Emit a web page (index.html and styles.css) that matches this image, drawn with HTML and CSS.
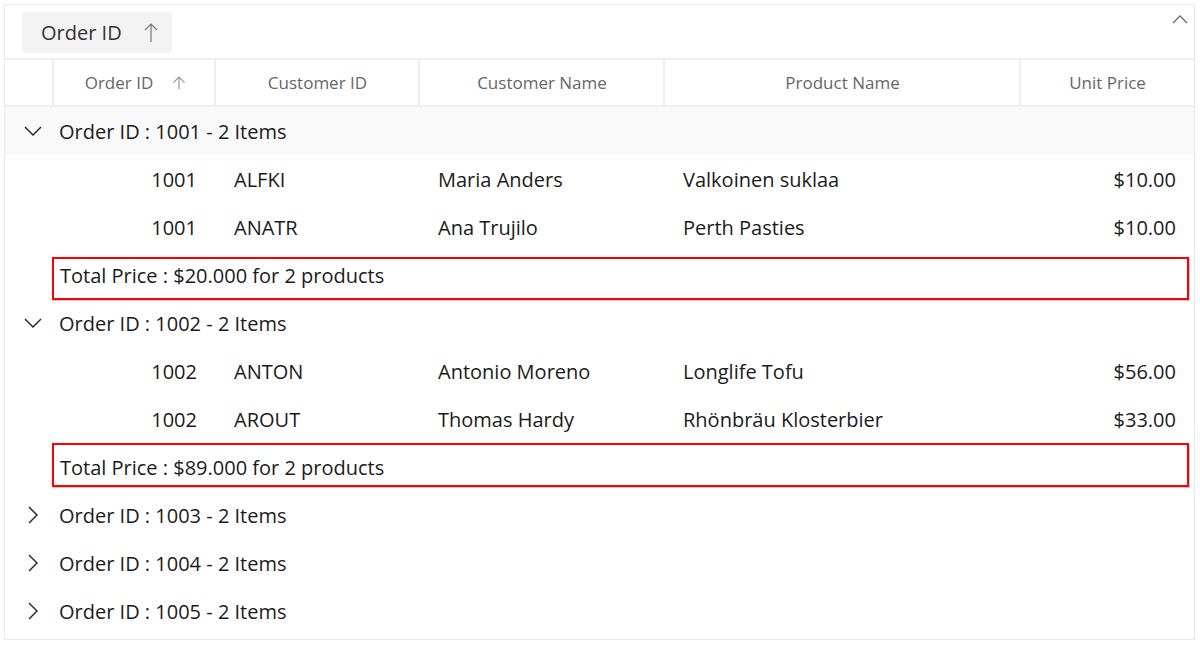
FILE: index.html
```html
<!DOCTYPE html>
<html>
<head>
<meta charset="utf-8">
<link rel="stylesheet" href="styles.css">
</head>
<body>
<div class="grid">
  <div class="group-panel">
    <div class="chip">
      <span class="chip-text">Order ID</span>
      <svg class="chip-arrow" width="14" height="20" viewBox="0 0 14 20"><path d="M7 1 V19 M1 7 L7 1 L13 7" fill="none" stroke="#7a7a7a" stroke-width="1.2"/></svg>
    </div>
    <svg class="panel-toggle" width="16" height="10" viewBox="0 0 16 10"><path d="M1 9 L8 2 L15 9" fill="none" stroke="#6b6b6b" stroke-width="1.3"/></svg>
  </div>
  <div class="header row-grid">
    <div class="hcell indent"></div>
    <div class="hcell sorted"><span>Order ID</span><svg class="hsort" width="14" height="14" viewBox="0 0 14 14"><path d="M7 1 V13 M1.5 6.5 L7 1 L12.5 6.5" fill="none" stroke="#9a9a9a" stroke-width="1.2"/></svg></div>
    <div class="hcell">Customer ID</div>
    <div class="hcell">Customer Name</div>
    <div class="hcell">Product Name</div>
    <div class="hcell">Unit Price</div>
  </div>

  <div class="group-row hl">
    <div class="expander"><svg width="18" height="10" viewBox="0 0 18 10"><path d="M1 1 L9 9 L17 1" fill="none" stroke="#2b2b2b" stroke-width="1.5"/></svg></div>
    <div class="group-text">Order ID : 1001 - 2 Items</div>
  </div>
  <div class="row-grid data">
    <div></div><div class="num">1001</div><div>ALFKI</div><div>Maria Anders</div><div>Valkoinen suklaa</div><div class="num">$10.00</div>
  </div>
  <div class="row-grid data">
    <div></div><div class="num">1001</div><div>ANATR</div><div>Ana Trujilo</div><div>Perth Pasties</div><div class="num">$10.00</div>
  </div>
  <div class="summary-row first"><div class="summary-box">Total Price : $20.000 for 2 products</div></div>

  <div class="group-row">
    <div class="expander"><svg width="18" height="10" viewBox="0 0 18 10"><path d="M1 1 L9 9 L17 1" fill="none" stroke="#2b2b2b" stroke-width="1.5"/></svg></div>
    <div class="group-text">Order ID : 1002 - 2 Items</div>
  </div>
  <div class="row-grid data">
    <div></div><div class="num">1002</div><div>ANTON</div><div>Antonio Moreno</div><div>Longlife Tofu</div><div class="num">$56.00</div>
  </div>
  <div class="row-grid data">
    <div></div><div class="num">1002</div><div>AROUT</div><div>Thomas Hardy</div><div>Rhönbräu Klosterbier</div><div class="num">$33.00</div>
  </div>
  <div class="summary-row second"><div class="summary-box">Total Price : $89.000 for 2 products</div></div>

  <div class="group-row">
    <div class="expander"><svg width="10" height="18" viewBox="0 0 10 18"><path d="M1 1 L9 9 L1 17" fill="none" stroke="#2b2b2b" stroke-width="1.5"/></svg></div>
    <div class="group-text">Order ID : 1003 - 2 Items</div>
  </div>
  <div class="group-row">
    <div class="expander"><svg width="10" height="18" viewBox="0 0 10 18"><path d="M1 1 L9 9 L1 17" fill="none" stroke="#2b2b2b" stroke-width="1.5"/></svg></div>
    <div class="group-text">Order ID : 1004 - 2 Items</div>
  </div>
  <div class="group-row">
    <div class="expander"><svg width="10" height="18" viewBox="0 0 10 18"><path d="M1 1 L9 9 L1 17" fill="none" stroke="#2b2b2b" stroke-width="1.5"/></svg></div>
    <div class="group-text">Order ID : 1005 - 2 Items</div>
  </div>
</div>
</body>
</html>
```

FILE: styles.css
```css
* { box-sizing: border-box; }
html, body { margin: 0; padding: 0; background: #ffffff; }
body {
  font-family: "Open Sans", "Noto Sans", sans-serif;
  color: #1b1b1b;
}
.grid {
  margin: 4px 0 0 4px;
  width: 1191px;
  height: 636px;
  border: 1px solid #e8e8e8;
  overflow: hidden;
}
.group-panel {
  height: 53px;
  display: flex;
  justify-content: space-between;
  align-items: flex-start;
  padding: 7px 6px 0 17px;
}
.chip {
  width: 150px;
  height: 41px;
  background: #f3f3f3;
  border-radius: 4px;
  display: flex;
  align-items: center;
  padding-left: 19px;
}
.chip-text { font-size: 20px; color: #333; }
.chip-arrow { margin-left: 22px; }
.panel-toggle { margin-top: 2px; }
.row-grid {
  display: grid;
  grid-template-columns: 48px 162px 204px 245px 356px 174px;
}
.header {
  height: 49px;
  border-top: 2px solid #efefef;
  border-bottom: 2px solid #efefef;
}
.hcell {
  display: flex;
  align-items: center;
  justify-content: center;
  font-size: 17px;
  color: #666;
  border-left: 2px solid #efefef;
  margin-left: -1px;
}
.hcell.indent { border-left: none; margin-left: 0; }
.hcell.sorted { padding-left: 2px; }
.hsort { margin-left: 19px; }
.group-row {
  height: 48px;
  display: flex;
  align-items: center;
  font-size: 20px;
}
.group-row.hl { background: #f9f9f9; }
.expander {
  width: 54px;
  display: flex;
  justify-content: center;
  padding-left: 1px;
}
.data {
  height: 48px;
  font-size: 20px;
}
.data > div {
  display: flex;
  align-items: center;
  padding: 0 19px;
}
.data > div.num { justify-content: flex-end; padding-right: 18px; }
.summary-row {
  height: 48px;
  padding-left: 47px;
}
.summary-row.first { padding-top: 6px; }
.summary-box {
  width: 1137px;
  height: 43px;
  border: 2px solid #ff0000;
  box-shadow: 1px 1px 0 #c8c8c8;
  display: flex;
  align-items: center;
  padding-left: 6px;
  font-size: 20px;
}
.summary-row.first .summary-box { padding-bottom: 6px; }
.summary-row.second .summary-box { height: 44px; padding-top: 4px; }
```
